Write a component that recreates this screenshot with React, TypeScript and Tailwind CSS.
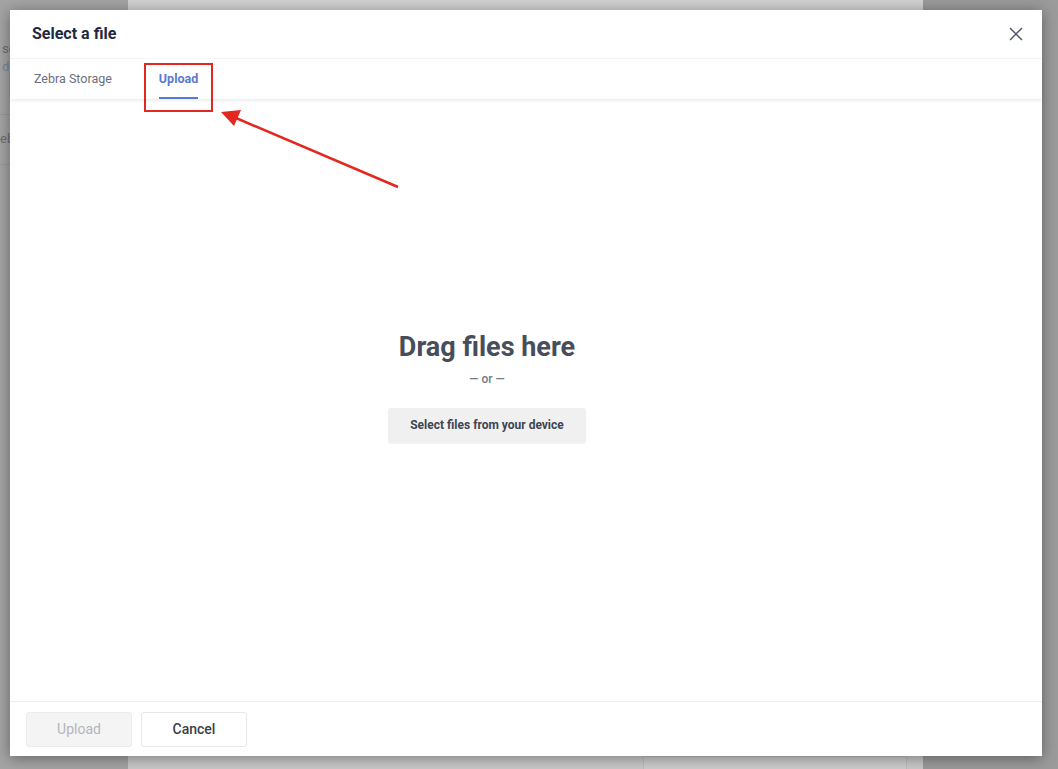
import React from "react";

const font = { fontFamily: "Roboto, 'Noto Sans', Arial, sans-serif" };

const Backdrop = () => (
  <div className="absolute inset-0 flex">
    <div className="w-[128px] bg-[#a4a4a4] flex flex-col text-[#6e6e6e] text-[13px]">
      <div className="h-[115px] border-b border-[#999] pl-[2px] pt-[40px] leading-[18px]">
        <div>se</div>
        <div className="text-[#7a84a0]">d l</div>
      </div>
      <div className="h-[50px] border-b border-[#999] pt-[14px]">eb</div>
      <div className="flex-1" />
    </div>
    <div className="flex-1 bg-[#c9c9c9] flex flex-col">
      <div className="h-[10px] bg-[#d2d2d2]" />
      <div className="flex-1" />
      <div className="h-[13px] flex justify-end gap-[16px] pr-[16px]">
        <div className="w-[264px] bg-[#cdcdcd] border-x border-t border-[#bdbdbd]" />
      </div>
    </div>
    <div className="w-[135px] bg-[#9b9b9b]" />
  </div>
);

export default function App() {
  return (
    <div className="relative w-[1058px] h-[769px] overflow-hidden" style={font}>
      <Backdrop />
      <div className="absolute left-[10px] top-[10px] w-[1032px] h-[746px] bg-white shadow-[0_2px_14px_rgba(0,0,0,0.4)] flex flex-col">
        <div className="h-[48px] flex items-center justify-between pl-[22px] pr-[18px]">
          <h2 className="text-[16px] font-bold text-[#1f2940]">Select a file</h2>
          <button className="text-[#4b5260]">
            <svg width="16" height="16" viewBox="0 0 16 16" fill="none" stroke="currentColor" strokeWidth="1.4">
              <path d="M2 2l12 12M14 2L2 14" />
            </svg>
          </button>
        </div>
        <div className="h-[41px] border-t border-[#f3f3f3] flex shadow-[0_2px_3px_rgba(0,0,0,0.07)] relative z-10">
          <div className="px-[24px] flex items-center text-[12.5px] text-[#6b7080]">Zebra Storage</div>
          <div className="pl-[23px] pr-[24px] flex items-center relative">
            <span className="text-[12.5px] font-bold text-[#5b79d3]">Upload</span>
            <div className="absolute left-[23px] right-[24px] bottom-0 h-[2px] bg-[#5b79d3]" />
          </div>
        </div>
        <div className="flex-1 flex flex-col items-center justify-center pr-[78px] pb-[27px]">
          <div className="text-[27px] font-bold text-[#474e5a] leading-[32px]">Drag files here</div>
          <div className="mt-[7px] text-[12px] font-medium text-[#757a84]">— or —</div>
          <button className="mt-[20px] h-[35px] px-[22px] rounded-[3px] bg-[#f0f0f0] text-[12px] font-bold text-[#3e4550] shadow-[0_1px_1px_rgba(0,0,0,0.05)]">
            Select files from your device
          </button>
        </div>
        <div className="h-[55px] border-t border-[#efefef] flex gap-[9px] pl-[16px] pt-[10px]">
          <button className="w-[106px] h-[35px] rounded-[3px] bg-[#f4f4f5] border border-[#ececee] text-[14px] text-[#b3b6bb]">Upload</button>
          <button className="w-[106px] h-[35px] rounded-[3px] bg-white border border-[#e6e7ea] text-[14px] font-medium text-[#3a3f48]">Cancel</button>
        </div>
      </div>
      <div className="absolute left-[144px] top-[63px] w-[69px] h-[49px] border-2 border-[#e3291f]" />
      <svg className="absolute left-0 top-0" width="1058" height="769">
        <line x1="398" y1="187" x2="236" y2="118" stroke="#e3291f" strokeWidth="2.5" />
        <polygon points="221,112 241,110 234,126" fill="#e3291f" />
      </svg>
    </div>
  );
}
